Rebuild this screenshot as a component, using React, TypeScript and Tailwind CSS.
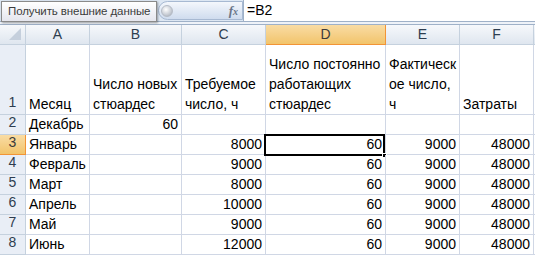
import React from "react";

const cols = [26, 64, 92, 84, 120, 74, 74];
const letters = ["A", "B", "C", "D", "E", "F"];

const months = ["Январь", "Февраль", "Март", "Апрель", "Май", "Июнь"];
const req = ["8000", "9000", "8000", "10000", "9000", "12000"];

function ColHeader({ w, label, sel }: { w: number; label: string; sel?: boolean }) {
  return (
    <div
      style={{ width: w }}
      className={
        sel
          ? "h-[20px] shrink-0 flex items-center justify-center border-r border-b border-[#f29436] bg-gradient-to-b from-[#f9dca4] to-[#f2c46a] text-[#3b3b3b]"
          : "h-[20px] shrink-0 flex items-center justify-center border-r border-b border-[#c5d1de] bg-gradient-to-b from-[#f6f8fb] to-[#dfe6ef] text-[#2e3d4f]"
      }
    >
      {label}
    </div>
  );
}

function RowNum({ n, h, sel }: { n: number; h: number; sel?: boolean }) {
  return (
    <div
      style={{ width: 26, height: h }}
      className={
        sel
          ? "shrink-0 flex items-end justify-center pb-[1px] border-r border-b border-[#f29436] bg-gradient-to-b from-[#f9dca4] to-[#f2c46a] text-[#3b3b3b]"
          : "shrink-0 flex items-end justify-center pb-[1px] border-r border-b border-[#c5d1de] bg-[#e9eef6] text-[#2e3d4f]"
      }
    >
      {n}
    </div>
  );
}

function Cell({ w, h, children, right }: { w: number; h: number; children?: React.ReactNode; right?: boolean }) {
  return (
    <div
      style={{ width: w, height: h }}
      className={
        "shrink-0 border-r border-b border-[#d0d7e5] flex flex-col justify-end px-[3px] leading-[20px] whitespace-nowrap overflow-visible " +
        (right ? "items-end" : "items-start")
      }
    >
      {children}
    </div>
  );
}

export default function App() {
  return (
    <div
      className="w-[535px] h-[258px] overflow-hidden bg-white text-[14px] text-black"
      style={{ fontFamily: '"Liberation Sans", Arial, sans-serif' }}
    >
      {/* formula bar */}
      <div className="h-[22px] flex bg-[#dde7f3] border-b border-[#9fb1c8]">
        <div className="w-[158px] shrink-0 pl-[1px] pt-[1px]">
          <div className="h-[21px] w-[156px] border border-[#8a8a8a] bg-gradient-to-b from-white to-[#e5e6ee] shadow-[1px_1px_2px_rgba(0,0,0,0.35)] text-[11.5px] tracking-[-0.1px] text-[#3c3c3c] flex items-center pl-[6px] whitespace-nowrap relative z-10">
            Получить внешние данные
          </div>
        </div>
        <div className="w-[85px] shrink-0 h-[19px] mt-[1px] rounded-l-[10px] border border-[#a7b9d2] bg-gradient-to-b from-[#f4f7fc] to-[#cfdcee] flex items-center justify-between pl-[2px] pr-[4px]">
          <div className="w-[12px] h-[12px] rounded-full bg-[radial-gradient(circle_at_40%_35%,#ffffff,#c7ccd4_60%,#9aa2ad)] border border-[#b6bcc6]" />
          <span
            className="italic font-bold text-[13px] text-[#6a7587]"
            style={{ fontFamily: '"Liberation Serif", serif' }}
          >
            f<span className="text-[10px]">x</span>
          </span>
        </div>
        <div className="flex-1 h-[21px] bg-white border-l border-[#9fb1c8] flex items-center pl-[3px]">
          =B2
        </div>
      </div>
      {/* gap */}
      <div className="h-[3px] bg-[#eef2f8] border-b border-[#9fb1c8]" />
      {/* column headers */}
      <div className="flex">
        <div className="w-[26px] h-[20px] shrink-0 border-r border-b border-[#c5d1de] bg-gradient-to-b from-[#f6f8fb] to-[#dfe6ef] relative">
          <svg width="14" height="14" className="absolute right-[3px] bottom-[3px]">
            <polygon points="13,1 13,13 1,13" fill="#c5cfdc" />
          </svg>
        </div>
        {letters.map((l, i) => (
          <ColHeader key={l} w={cols[i + 1]} label={l} sel={l === "D"} />
        ))}
        <div className="flex-1 h-[20px] border-b border-[#c5d1de] bg-gradient-to-b from-[#f6f8fb] to-[#dfe6ef]" />
      </div>
      {/* row 1 */}
      <div className="flex">
        <RowNum n={1} h={70} />
        <Cell w={cols[1]} h={70}>Месяц</Cell>
        <Cell w={cols[2]} h={70}>
          <span>Число новых</span>
          <span>стюардес</span>
        </Cell>
        <Cell w={cols[3]} h={70}>
          <span>Требуемое</span>
          <span>число, ч</span>
        </Cell>
        <Cell w={cols[4]} h={70}>
          <span>Число постоянно</span>
          <span>работающих</span>
          <span>стюардес</span>
        </Cell>
        <Cell w={cols[5]} h={70}>
          <span>Фактическ</span>
          <span>ое число,</span>
          <span>ч</span>
        </Cell>
        <Cell w={cols[6]} h={70}>Затраты</Cell>
        <div className="flex-1 border-b border-[#d0d7e5]" />
      </div>
      {/* row 2 */}
      <div className="flex">
        <RowNum n={2} h={20} />
        <Cell w={cols[1]} h={20}>Декабрь</Cell>
        <Cell w={cols[2]} h={20} right>60</Cell>
        <Cell w={cols[3]} h={20} />
        <Cell w={cols[4]} h={20} />
        <Cell w={cols[5]} h={20} />
        <Cell w={cols[6]} h={20} />
        <div className="flex-1 border-b border-[#d0d7e5]" />
      </div>
      {months.map((m, i) => (
        <div className="flex" key={m}>
          <RowNum n={i + 3} h={20} sel={i === 0} />
          <Cell w={cols[1]} h={20}>{m}</Cell>
          <Cell w={cols[2]} h={20} />
          <Cell w={cols[3]} h={20} right>{req[i]}</Cell>
          <div className="relative shrink-0">
            <Cell w={cols[4]} h={20} right>60</Cell>
            {i === 0 && (
              <>
                <div className="absolute left-[-2px] top-[-1px] w-[121px] h-[22px] border-2 border-black pointer-events-none" />
                <div className="absolute left-[116px] top-[18px] w-[5px] h-[5px] bg-black border border-white" />
              </>
            )}
          </div>
          <Cell w={cols[5]} h={20} right>9000</Cell>
          <Cell w={cols[6]} h={20} right>48000</Cell>
          <div className="flex-1 border-b border-[#d0d7e5]" />
        </div>
      ))}
    </div>
  );
}
